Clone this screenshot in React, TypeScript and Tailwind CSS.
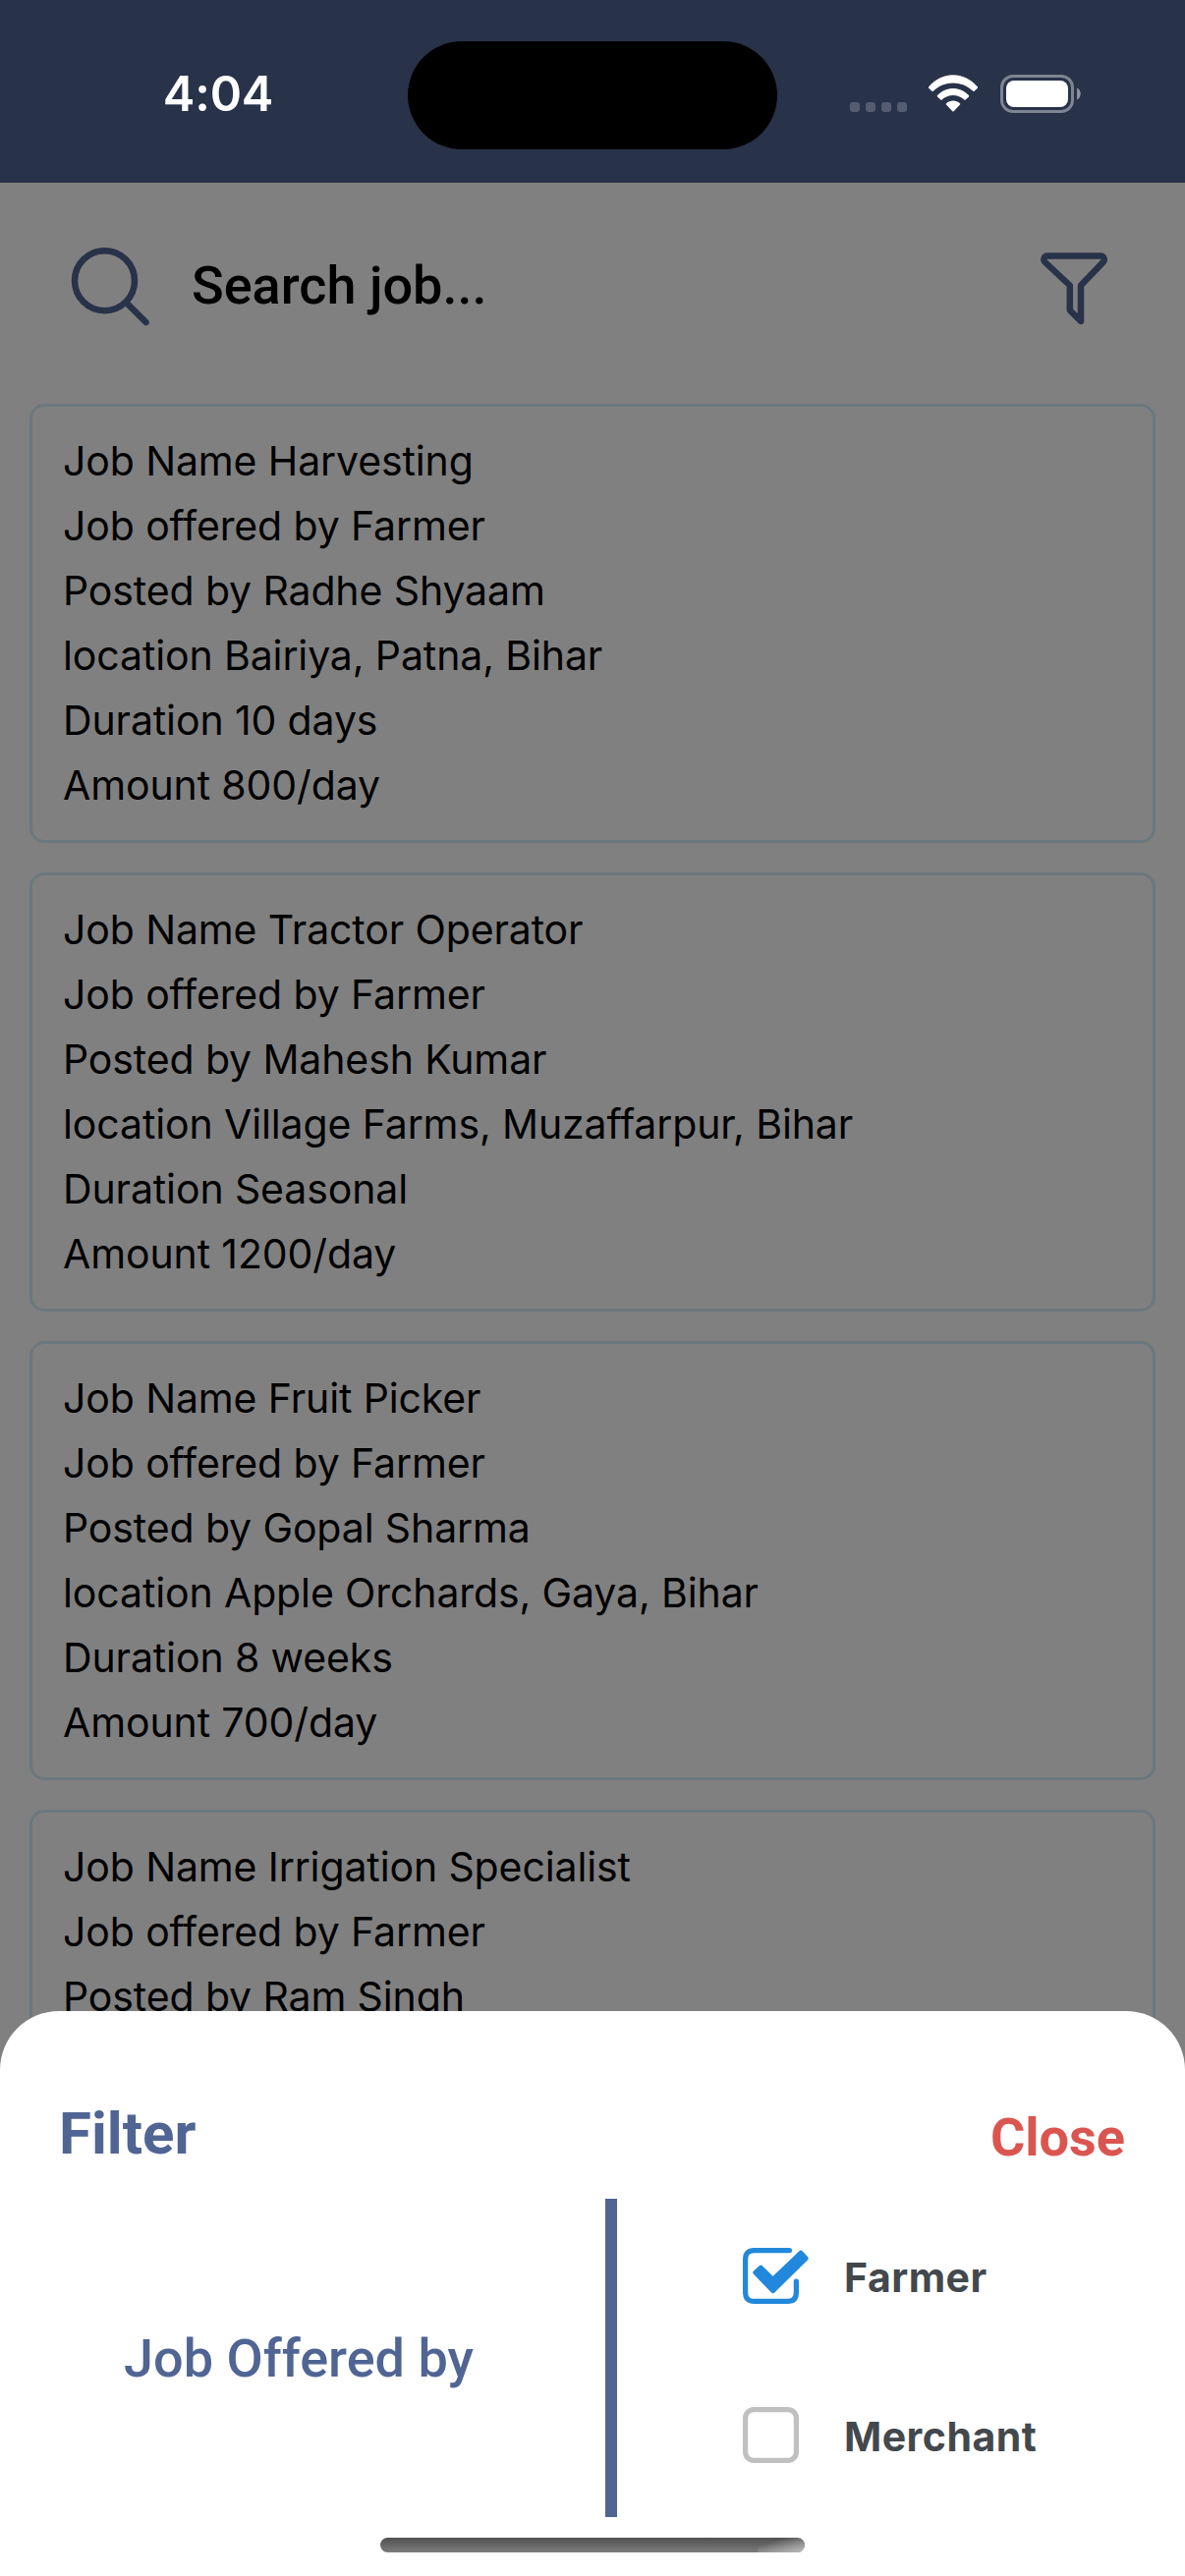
const jobs = [
  ["Job Name Harvesting", "Job offered by Farmer", "Posted by Radhe Shyaam", "location Bairiya, Patna, Bihar", "Duration 10 days", "Amount 800/day"],
  ["Job Name Tractor Operator", "Job offered by Farmer", "Posted by Mahesh Kumar", "location Village Farms, Muzaffarpur, Bihar", "Duration Seasonal", "Amount 1200/day"],
  ["Job Name Fruit Picker", "Job offered by Farmer", "Posted by Gopal Sharma", "location Apple Orchards, Gaya, Bihar", "Duration 8 weeks", "Amount 700/day"],
  ["Job Name Irrigation Specialist", "Job offered by Farmer", "Posted by Ram Singh"],
];

function StatusBar() {
  return (
    <header className="flex h-[186px] shrink-0 items-start bg-[#283249]">
      <div className="flex w-[415px] justify-center pt-[66px] pl-[29px] text-[49px] leading-[60px] font-semibold tracking-[-0.2px] text-white">4:04</div>
      <div className="mt-[42px] h-[110px] w-[376px] rounded-full bg-black" />
      <div className="mt-[76px] ml-[74px] flex h-[39px] items-end">
        <div className="mb-px flex gap-[6px]">
          {[0, 1, 2, 3].map((i) => (
            <span key={i} className="size-[10px] rounded-[3px] bg-[#555c70]" />
          ))}
        </div>
        <svg className="mb-px ml-[21px] h-[38px] w-[52px]" viewBox="0 0 52 38" fill="#fff">
          <path d="M1.2 12.3C15-3.9 37-3.9 50.8 12.3q.6.7 0 1.4l-3.2 3.1q-.7.6-1.3 0C35 5.6 17 5.6 5.7 16.8q-.6.6-1.3 0L1.2 13.7q-.6-.7 0-1.4z" />
          <path d="M10 21.1C19 11.7 33 11.7 42 21.1q.6.7 0 1.3l-3.3 3.2q-.7.6-1.3 0C31 19.5 21 19.5 14.6 25.6q-.6.6-1.3 0L10 22.4q-.6-.6 0-1.3z" />
          <path d="M19 29.2C23 25.5 29 25.5 33 29.2q.7.7 0 1.4L26.7 37.3q-.7.6-1.4 0L19 30.6q-.7-.7 0-1.4z" />
        </svg>
        <svg className="ml-[22px] h-[39px] w-[83px]" viewBox="0 0 83 39">
          <rect x="1.5" y="1.5" width="72" height="36" rx="11.5" fill="none" stroke="#7e8492" strokeWidth="3" />
          <rect x="6" y="6" width="63" height="27" rx="8" fill="#fff" />
          <path d="M78 13.500c5 2 5 10 0 12z" fill="#8d92a0" />
        </svg>
      </div>
    </header>
  );
}

function SearchBar() {
  return (
    <div className="flex h-[225px] items-start text-[#283249]">
      <svg className="mt-[64px] ml-[70px] h-[82px] w-[84px]" viewBox="70 250 84 82" fill="none" stroke="currentColor" strokeWidth="6.5" strokeLinecap="round">
        <circle cx="106.5" cy="285.7" r="30.5" />
        <path d="M129 308.5 148.5 328" />
      </svg>
      <div className="mt-[75px] ml-[41px] font-['Roboto',sans-serif] text-[54px] leading-[60px] font-medium whitespace-nowrap text-black">Search job...</div>
      <svg className="mt-[66px] mr-[76px] ml-auto h-[82px] w-[74px]" viewBox="1056 252 74 82" fill="none" stroke="currentColor" strokeWidth="6.5" strokeLinejoin="round">
        <path d="M1066 260.5H1120C1123.500 260.500 1124.800 264.500 1122.500 267L1100 290.500V327L1088.800 315.700V290.500L1063.700 267C1061.200 264.500 1062.500 260.500 1066 260.500Z" />
      </svg>
    </div>
  );
}

function JobCard({ lines }: { lines: string[] }) {
  return (
    <article className="h-[447px] shrink-0 rounded-[15px] border-[3px] border-[#6b787d] pt-[22px] pl-[31px] text-[41px] leading-[66px] tracking-[-0.12px] whitespace-nowrap text-black">
      {lines.map((line) => (
        <p key={line}>{line}</p>
      ))}
    </article>
  );
}

function Option({ label, checked }: { label: string; checked: boolean }) {
  return (
    <label className="flex h-[162px] items-center pl-[125px]">
      <svg className="mb-[5px] h-[63px] w-[72px]" viewBox="0 0 72 63" fill="none">
        {checked ? (
          <>
            <path d="M51.500 6.300Q50 5.600 48 5.600H14Q5.600 5.600 5.600 14V49Q5.600 57.400 14 57.400H48Q57.400 57.400 57.400 49V38L55.500 38.500" stroke="none" />
            <path d="M50.500 5.700Q49.500 5.600 48 5.600H14.500Q5.600 5.600 5.600 14.500V48.500Q5.600 57.400 14.500 57.400H48.500Q57.400 57.400 57.400 48.500V37" stroke="#2288dc" strokeWidth="5.200" strokeLinecap="round" />
            <path d="M15.500 28.200 21.300 22.800 33.700 35 62 7.900 67.500 13.700 33.700 47Z" fill="#2288dc" stroke="#2288dc" strokeWidth="4.500" strokeLinejoin="round" />
          </>
        ) : (
          <rect x="5.6" y="5.6" width="51.8" height="51.8" rx="8.5" stroke="#c0c0c0" strokeWidth="5.2" />
        )}
      </svg>
      <span className="mb-px ml-[34px] text-[41px] font-bold tracking-[0.5px] text-[#43484d]">{label}</span>
    </label>
  );
}

function FilterSheet() {
  return (
    <section className="absolute inset-x-0 bottom-0 flex h-[575px] flex-col rounded-t-[60px] bg-white font-['Inter',sans-serif]">
      <div className="flex h-[191px] items-start justify-between pr-[61px] pl-[60px] font-['Roboto',sans-serif] font-bold">
        <h2 className="mt-[90px] text-[60px] leading-[70px] text-[#506594]">Filter</h2>
        <button className="mt-[94px] text-[54px] leading-[70px] text-[#db5550]">Close</button>
      </div>
      <div className="flex h-[324px]">
        <div className="flex w-[616px] items-center justify-center pr-[8px] font-['Roboto',sans-serif] text-[54px] font-medium text-[#506594]">Job Offered by</div>
        <div className="w-[12px] bg-[#506594]" />
        <div className="flex flex-1 flex-col">
          <Option label="Farmer" checked />
          <Option label="Merchant" checked={false} />
        </div>
      </div>
      <div className="mx-auto mt-[21px] flex h-[15px] w-[432px] justify-end overflow-hidden rounded-full bg-linear-to-b from-[#505050] to-[#7c7c7c]">
        <div className="w-[48px] bg-linear-to-br from-transparent from-30% to-[#bdbdbd]" />
      </div>
    </section>
  );
}

export default function App() {
  return (
    <div className="relative flex h-[2622px] w-[1206px] flex-col overflow-hidden bg-[#808080] font-['Inter',sans-serif]">
      <StatusBar />
      <SearchBar />
      <main className="flex flex-col gap-[30px] px-[30px]">
        {jobs.map((lines) => (
          <JobCard key={lines[0]} lines={lines} />
        ))}
      </main>
      <FilterSheet />
    </div>
  );
}
